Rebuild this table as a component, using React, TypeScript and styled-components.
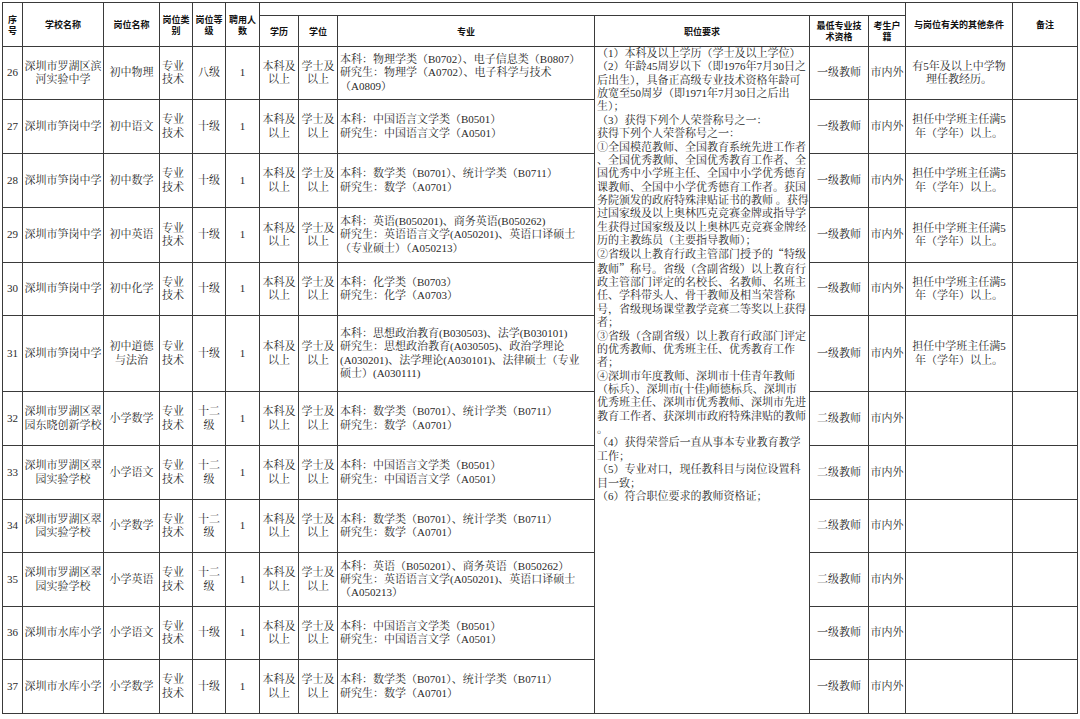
import React from "react";
import styled, { createGlobalStyle } from "styled-components";

const Global = createGlobalStyle`
  html, body { margin: 0; padding: 0; background: #fff; }
`;

const BODY_FONT = `"Liberation Serif", "Noto Serif CJK SC", "Noto Sans CJK SC", serif`;
const CJK_FONT = `"Noto Serif CJK SC", "Noto Sans CJK SC", serif`;
const HEAD_FONT = `"Noto Sans CJK SC", "Liberation Sans", sans-serif`;
const LINE = "#3a3a3a";

const Page = styled.div`
  padding: 2px 0 0 2px;
`;

const Sheet = styled.table`
  border-collapse: collapse;
  table-layout: fixed;
  width: 1075px;
`;

const Col = styled.col<{ $w: number }>`
  width: ${(p) => p.$w}px;
`;

const Row = styled.tr<{ $h: number }>`
  height: ${(p) => p.$h}px;
`;

const HeadCell = styled.th`
  border: 1px solid ${LINE};
  padding: 0 1px;
  font-family: ${HEAD_FONT};
  font-weight: 700;
  font-size: 9px;
  line-height: 11px;
  color: #111;
  text-align: center;
  vertical-align: middle;
`;

const Cell = styled.td<{ $align?: "left" | "center"; $pad?: number }>`
  border: 1px solid ${LINE};
  padding: 0 0 0 ${(p) => p.$pad ?? 0}px;
  font-family: ${BODY_FONT};
  font-size: 11px;
  line-height: 13.3px;
  color: #2a2a2a;
  text-align: ${(p) => p.$align ?? "center"};
  vertical-align: middle;
  white-space: nowrap;
  overflow: hidden;
`;

const RequireCell = styled.td`
  border: 1px solid ${LINE};
  padding: 0 0 0 2px;
  font-family: ${BODY_FONT};
  font-size: 11px;
  line-height: 13.36px;
  color: #2a2a2a;
  text-align: left;
  vertical-align: top;
  white-space: nowrap;
  overflow: hidden;
`;

const Line = styled.span`
  display: block;
`;

const WideQuote = styled.span`
  font-family: ${CJK_FONT};
`;

const renderText = (t: string) =>
  t.split(/([“”])/).map((part, j) =>
    part === "“" || part === "”" ? <WideQuote key={j}>{part}</WideQuote> : part
  );

const Lines = ({ items }: { items: string[] }) => (
  <>
    {items.map((t, i) => (
      <Line key={i}>{renderText(t)}</Line>
    ))}
  </>
);

type DataRow = {
  no: number;
  h: number;
  school: string[];
  post: string[];
  level: string[];
  major: string[];
  qual: string;
  other: string[];
};

const CHN = ["本科：中国语言文学类（B0501）", "研究生：中国语言文学（A0501）"];
const MATH = ["本科：数学类（B0701）、统计学类（B0711）", "研究生：数学（A0701）"];
const HEAD5 = ["担任中学班主任满5", "年（学年）以上。"];

const rows: DataRow[] = [
  {
    no: 26,
    h: 53,
    school: ["深圳市罗湖区滨", "河实验中学"],
    post: ["初中物理"],
    level: ["八级"],
    major: [
      "本科：物理学类（B0702）、电子信息类（B0807）",
      "研究生：物理学（A0702）、电子科学与技术",
      "（A0809）",
    ],
    qual: "一级教师",
    other: ["有5年及以上中学物", "理任教经历。"],
  },
  { no: 27, h: 54, school: ["深圳市笋岗中学"], post: ["初中语文"], level: ["十级"], major: CHN, qual: "一级教师", other: HEAD5 },
  { no: 28, h: 54, school: ["深圳市笋岗中学"], post: ["初中数学"], level: ["十级"], major: MATH, qual: "一级教师", other: HEAD5 },
  {
    no: 29,
    h: 55,
    school: ["深圳市笋岗中学"],
    post: ["初中英语"],
    level: ["十级"],
    major: [
      "本科：英语(B050201)、商务英语(B050262)",
      "研究生：英语语言文学(A050201)、英语口译硕士",
      "（专业硕士）（A050213）",
    ],
    qual: "一级教师",
    other: HEAD5,
  },
  {
    no: 30,
    h: 53,
    school: ["深圳市笋岗中学"],
    post: ["初中化学"],
    level: ["十级"],
    major: ["本科：化学类（B0703）", "研究生：化学（A0703）"],
    qual: "一级教师",
    other: HEAD5,
  },
  {
    no: 31,
    h: 76,
    school: ["深圳市笋岗中学"],
    post: ["初中道德", "与法治"],
    level: ["十级"],
    major: [
      "本科：思想政治教育(B030503)、法学(B030101)",
      "研究生：思想政治教育(A030505)、政治学理论",
      "(A030201)、法学理论(A030101)、法律硕士（专业",
      "硕士）(A030111)",
    ],
    qual: "一级教师",
    other: HEAD5,
  },
  { no: 32, h: 54, school: ["深圳市罗湖区翠", "园东晓创新学校"], post: ["小学数学"], level: ["十二", "级"], major: MATH, qual: "二级教师", other: [] },
  { no: 33, h: 54, school: ["深圳市罗湖区翠", "园实验学校"], post: ["小学语文"], level: ["十二", "级"], major: CHN, qual: "二级教师", other: [] },
  { no: 34, h: 53, school: ["深圳市罗湖区翠", "园实验学校"], post: ["小学数学"], level: ["十二", "级"], major: MATH, qual: "二级教师", other: [] },
  {
    no: 35,
    h: 54,
    school: ["深圳市罗湖区翠", "园实验学校"],
    post: ["小学英语"],
    level: ["十二", "级"],
    major: [
      "本科：英语（B050201）、商务英语（B050262）",
      "研究生：英语语言文学(A050201)、英语口译硕士",
      "（A050213）",
    ],
    qual: "二级教师",
    other: [],
  },
  { no: 36, h: 53, school: ["深圳市水库小学"], post: ["小学语文"], level: ["十级"], major: CHN, qual: "一级教师", other: [] },
  { no: 37, h: 54, school: ["深圳市水库小学"], post: ["小学数学"], level: ["十级"], major: MATH, qual: "一级教师", other: [] },
];

const requirements = [
  "（1）本科及以上学历（学士及以上学位）",
  "（2）年龄45周岁以下（即1976年7月30日之",
  "后出生），具备正高级专业技术资格年龄可",
  "放宽至50周岁（即1971年7月30日之后出",
  "生）；",
  "（3）获得下列个人荣誉称号之一：",
  "获得下列个人荣誉称号之一：",
  "①全国模范教师、全国教育系统先进工作者",
  "、全国优秀教师、全国优秀教育工作者、全",
  "国优秀中小学班主任、全国中小学优秀德育",
  "课教师、全国中小学优秀德育工作者。获国",
  "务院颁发的政府特殊津贴证书的教师 。获得",
  "过国家级及以上奥林匹克竞赛金牌或指导学",
  "生获得过国家级及以上奥林匹克竞赛金牌经",
  "历的主教练员（主要指导教师）；",
  "②省级以上教育行政主管部门授予的“特级",
  "教师”称号。省级（含副省级）以上教育行",
  "政主管部门评定的名校长、名教师、名班主",
  "任、学科带头人、骨干教师及相当荣誉称",
  "号，省级现场课堂教学竞赛二等奖以上获得",
  "者；",
  "③省级（含副省级）以上教育行政部门评定",
  "的优秀教师、优秀班主任、优秀教育工作",
  "者；",
  "④深圳市年度教师、深圳市十佳青年教师",
  "（标兵）、深圳市(十佳)师德标兵、深圳市",
  "优秀班主任、深圳市优秀教师、深圳市先进",
  "教育工作者、获深圳市政府特殊津贴的教师",
  "。",
  "（4）获得荣誉后一直从事本专业教育教学",
  "工作；",
  "（5）专业对口，现任教科目与岗位设置科",
  "目一致；",
  "（6）符合职位要求的教师资格证；",
];

const widths = [20, 81, 56, 33, 33, 34, 39, 39, 257, 215, 59, 37, 107, 65];

export default function App() {
  return (
    <Page>
      <Global />
      <Sheet>
        <colgroup>
          {widths.map((w, i) => (
            <Col key={i} $w={w} />
          ))}
        </colgroup>
        <thead>
          <Row $h={13}>
            <HeadCell rowSpan={2}>序<br />号</HeadCell>
            <HeadCell rowSpan={2}>学校名称</HeadCell>
            <HeadCell rowSpan={2}>岗位名称</HeadCell>
            <HeadCell rowSpan={2}>岗位类<br />别</HeadCell>
            <HeadCell rowSpan={2}>岗位等<br />级</HeadCell>
            <HeadCell rowSpan={2}>聘用人<br />数</HeadCell>
            <HeadCell colSpan={6}></HeadCell>
            <HeadCell rowSpan={2}>与岗位有关的其他条件</HeadCell>
            <HeadCell rowSpan={2}>备注</HeadCell>
          </Row>
          <Row $h={31}>
            <HeadCell>学历</HeadCell>
            <HeadCell>学位</HeadCell>
            <HeadCell>专业</HeadCell>
            <HeadCell>职位要求</HeadCell>
            <HeadCell>最低专业技<br />术资格</HeadCell>
            <HeadCell>考生户<br />籍</HeadCell>
          </Row>
        </thead>
        <tbody>
          {rows.map((r, i) => (
            <Row key={r.no} $h={r.h}>
              <Cell>{r.no}</Cell>
              <Cell><Lines items={r.school} /></Cell>
              <Cell><Lines items={r.post} /></Cell>
              <Cell $align="left" $pad={2}><Lines items={["专业", "技术"]} /></Cell>
              <Cell><Lines items={r.level} /></Cell>
              <Cell>1</Cell>
              <Cell><Lines items={["本科及", "以上"]} /></Cell>
              <Cell><Lines items={["学士及", "以上"]} /></Cell>
              <Cell $align="left" $pad={2}><Lines items={r.major} /></Cell>
              {i === 0 && (
                <RequireCell rowSpan={rows.length}>
                  <Lines items={requirements} />
                </RequireCell>
              )}
              <Cell>{r.qual}</Cell>
              <Cell>市内外</Cell>
              <Cell><Lines items={r.other} /></Cell>
              <Cell></Cell>
            </Row>
          ))}
        </tbody>
      </Sheet>
    </Page>
  );
}
